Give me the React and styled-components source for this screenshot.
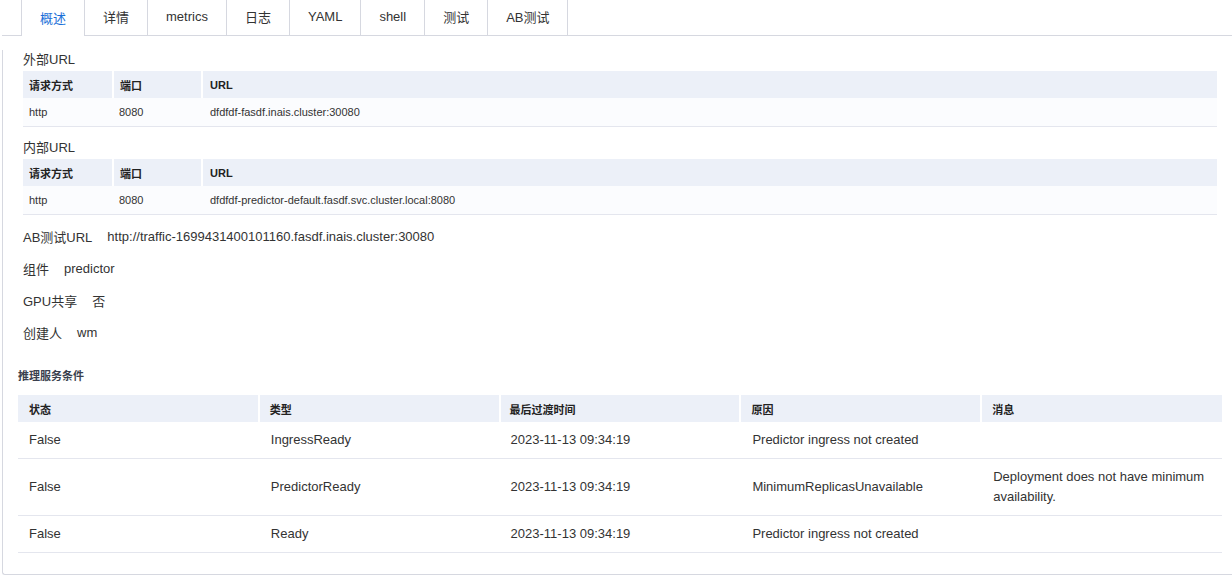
import React, { useState } from 'react';
import styled, { createGlobalStyle } from 'styled-components';

const GlobalStyle = createGlobalStyle`
  body {
    margin: 0;
    background: #fff;
    font-family: 'Liberation Sans', Arial, 'Noto Sans CJK SC', sans-serif;
    color: #333;
  }
`;

const Page = styled.div`
  padding-left: 2px;
  width: 1230px;
`;

const TabBar = styled.div`
  display: flex;
  align-items: flex-start;
  height: 35px;
  padding-left: 19px;
  border-bottom: 1px solid #d6d8e0;
`;

const Tab = styled.div`
  height: ${(props) => (props.active ? '36px' : '35px')};
  box-sizing: border-box;
  padding: 0 18px 2px;
  display: flex;
  align-items: center;
  font-size: 13px;
  background: #fff;
  border-right: 1px solid #d6d8e0;
  border-left: ${(props) => (props.first ? '1px solid #d6d8e0' : 'none')};
  color: ${(props) => (props.active ? '#1a6fd8' : '#333')};
  cursor: pointer;
`;

const Panel = styled.div`
  border-left: 1px solid #d6d8e0;
  border-bottom: 1px solid #d6d8e0;
  border-bottom-left-radius: 3px;
  padding-bottom: 21px;
`;

const Section = styled.div`
  padding: ${(props) => props.pad};
`;

const SectionTitle = styled.div`
  font-size: 13px;
  line-height: 20px;
  margin-top: ${(props) => props.top || '11px'};
  margin-bottom: 1px;
  color: #333;
`;

const Table = styled.table`
  width: 100%;
  border-collapse: collapse;
  table-layout: fixed;
`;

const Th = styled.th`
  box-sizing: border-box;
  height: 27px;
  padding: 0 0 0 ${(props) => props.pl || '6px'};
  text-align: left;
  font-size: 11px;
  font-weight: bold;
  color: #222;
  background: #ecf0f8;
  border-left: ${(props) => (props.sep ? '2px solid #fff' : 'none')};
  width: ${(props) => props.w || 'auto'};
`;

const Td = styled.td`
  height: 28px;
  padding: 0 0 0 ${(props) => props.pl || '6px'};
  font-size: 11px;
  color: #333;
  background: #fbfcfe;
  border-bottom: 1px solid #e4e6ee;
`;

const CondTd = styled.td`
  padding: 8px ${(props) => props.pr || '0'} 8px ${(props) => props.pl || '11px'};
  font-size: 13px;
  line-height: 20px;
  color: #333;
  background: #fff;
  border-bottom: 1px solid #e4e6ee;
`;

const InfoList = styled.div`
  margin-top: 5px;
`;

const InfoRow = styled.div`
  display: flex;
  align-items: center;
  height: 32px;
  font-size: 13px;
  color: #333;
`;

const InfoLabel = styled.span`
  margin-right: 15px;
`;

const CondTitle = styled.div`
  font-size: 11px;
  font-weight: bold;
  line-height: 20px;
  margin: 18px 0 9px;
  color: #3a3f4e;
`;

const tabs = ['概述', '详情', 'metrics', '日志', 'YAML', 'shell', '测试', 'AB测试'];

const conditions = [
  { status: 'False', type: 'IngressReady', time: '2023-11-13 09:34:19', reason: 'Predictor ingress not created', msg: '' },
  {
    status: 'False',
    type: 'PredictorReady',
    time: '2023-11-13 09:34:19',
    reason: 'MinimumReplicasUnavailable',
    msg: 'Deployment does not have minimum availability.',
  },
  { status: 'False', type: 'Ready', time: '2023-11-13 09:34:19', reason: 'Predictor ingress not created', msg: '' },
];

const UrlTable = ({ url }) => (
  <Table>
    <thead>
      <tr>
        <Th w="90px">请求方式</Th>
        <Th w="89px" sep>端口</Th>
        <Th sep pl="7px">URL</Th>
      </tr>
    </thead>
    <tbody>
      <tr>
        <Td>http</Td>
        <Td>8080</Td>
        <Td pl="8px">{url}</Td>
      </tr>
    </tbody>
  </Table>
);

const App = () => {
  const [active, setActive] = useState(0);

  return (
    <Page>
      <GlobalStyle />
      <TabBar>
        {tabs.map((t, i) => (
          <Tab key={t} first={i === 0} active={i === active} onClick={() => setActive(i)}>
            {t}
          </Tab>
        ))}
      </TabBar>
      <Panel>
        <Section pad="0 15px 0 20px">
          <SectionTitle top="14px">外部URL</SectionTitle>
          <UrlTable url="dfdfdf-fasdf.inais.cluster:30080" />
          <SectionTitle>内部URL</SectionTitle>
          <UrlTable url="dfdfdf-predictor-default.fasdf.svc.cluster.local:8080" />
          <InfoList>
            <InfoRow>
              <InfoLabel>AB测试URL</InfoLabel>
              http://traffic-1699431400101160.fasdf.inais.cluster:30080
            </InfoRow>
            <InfoRow>
              <InfoLabel>组件</InfoLabel>
              predictor
            </InfoRow>
            <InfoRow>
              <InfoLabel>GPU共享</InfoLabel>
              否
            </InfoRow>
            <InfoRow>
              <InfoLabel>创建人</InfoLabel>
              wm
            </InfoRow>
          </InfoList>
        </Section>
        <Section pad="0 10px 0 15px">
          <CondTitle>推理服务条件</CondTitle>
          <Table>
            <thead>
              <tr>
                <Th pl="11px">状态</Th>
                <Th pl="10px" sep>类型</Th>
                <Th pl="9px" sep>最后过渡时间</Th>
                <Th pl="10px" sep>原因</Th>
                <Th pl="10px" sep>消息</Th>
              </tr>
            </thead>
            <tbody>
              {conditions.map((c) => (
                <tr key={c.type}>
                  <CondTd>{c.status}</CondTd>
                  <CondTd pl="12px">{c.type}</CondTd>
                  <CondTd>{c.time}</CondTd>
                  <CondTd pl="12px">{c.reason}</CondTd>
                  <CondTd pl="12px" pr="12px">{c.msg}</CondTd>
                </tr>
              ))}
            </tbody>
          </Table>
        </Section>
      </Panel>
    </Page>
  );
};

export default App;
